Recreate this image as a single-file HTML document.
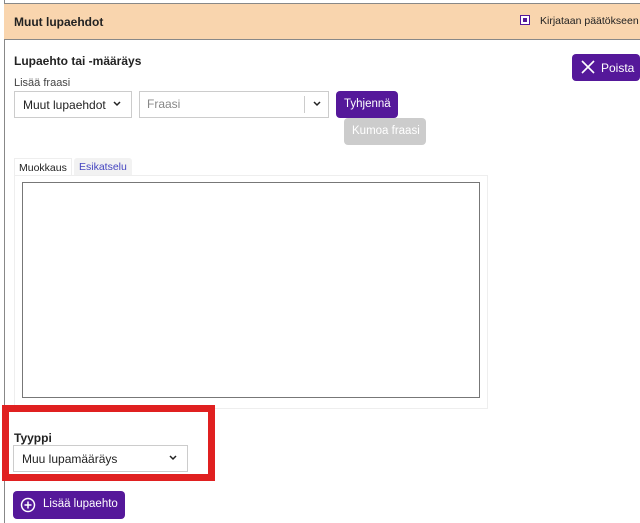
<!DOCTYPE html><html><head><style>
body{margin:0;width:640px;height:523px;background:#fff;font-family:"Liberation Sans",sans-serif;position:relative;overflow:hidden;color:#222}
div,span{position:absolute;box-sizing:border-box;white-space:nowrap}
.sel{border:1px solid #ccc;background:#fff;font-size:12px;}
.btn{background:#55189a;color:#fff;border-radius:4px;font-size:11.5px;}
</style></head><body>
<div style="left:4px;top:0;width:1px;height:523px;background:#888"></div>
<div style="left:4px;top:3px;width:636px;height:37px;background:#f9d5ae;border-top:1px solid #888;border-bottom:1px solid #888"></div>
<div style="left:14px;top:15px;font-size:12px;font-weight:bold">Muut lupaehdot</div>
<div style="left:520px;top:15px;width:10px;height:10px;border:1px solid #55189a;background:#fff"><span style="left:2px;top:2px;width:4px;height:4px;background:#55189a"></span></div>
<div style="left:540px;top:15px;font-size:10.5px">Kirjataan päätökseen</div>
<div style="left:14px;top:54px;font-size:12px;font-weight:bold">Lupaehto tai -määräys</div>
<div class="btn" style="left:572px;top:54px;width:68px;height:27px;font-size:12px;padding:7px 0 0 29px">Poista</div>
<svg style="position:absolute;left:581px;top:60px" width="14" height="14"><path d="M1 1L13 13M13 1L1 13" stroke="#fff" stroke-width="1.6"/></svg>
<div style="left:14px;top:77px;font-size:11px;color:#444">Lisää fraasi</div>
<div class="sel" style="left:14px;top:91px;width:118px;height:27px;padding:6px 0 0 8px">Muut lupaehdot</div>
<svg style="position:absolute;left:113px;top:101px" width="8" height="6"><path d="M1 1L4 4L7 1" stroke="#222" stroke-width="1.5" fill="none"/></svg>
<div class="sel" style="left:139px;top:91px;width:190px;height:27px;padding:5px 0 0 7px;color:#888">Fraasi</div>
<div style="left:304px;top:96px;width:1px;height:17px;background:#ccc"></div>
<svg style="position:absolute;left:313px;top:101px" width="8" height="6"><path d="M1 1L4 4L7 1" stroke="#222" stroke-width="1.5" fill="none"/></svg>
<div class="btn" style="left:336px;top:91px;width:62px;height:27px;padding:7px 0 0 8px">Tyhjennä</div>
<div class="btn" style="left:344px;top:118px;width:82px;height:27px;padding:7px 0 0 8px;background:#ccc">Kumoa fraasi</div>
<div style="left:14px;top:158px;width:58px;height:18px;border:1px solid #eee;border-bottom:none;font-size:10.5px;padding:3px 0 0 4px">Muokkaus</div>
<div style="left:74px;top:158px;width:58px;height:18px;background:#f2f2f2;border-radius:3px 3px 0 0;font-size:10.5px;padding:3px 0 0 5px;color:#4545c0">Esikatselu</div>
<div style="left:14px;top:175px;width:474px;height:234px;border:1px solid #eee"></div>
<div style="left:22px;top:182px;width:458px;height:216px;border:1px solid #777"></div>
<div style="left:2px;top:405px;width:213px;height:76px;border:7px solid #e02020"></div>
<div style="left:14px;top:431px;font-size:12px;font-weight:bold">Tyyppi</div>
<div class="sel" style="left:13px;top:445px;width:175px;height:27px;padding:6px 0 0 8px">Muu lupamääräys</div>
<svg style="position:absolute;left:169px;top:455px" width="8" height="6"><path d="M1 1L4 4L7 1" stroke="#222" stroke-width="1.5" fill="none"/></svg>
<div class="btn" style="left:13px;top:491px;width:112px;height:28px;padding:7px 0 0 30px">Lisää lupaehto</div>
<svg style="position:absolute;left:20px;top:497px" width="16" height="16"><circle cx="8" cy="8" r="6.5" stroke="#fff" stroke-width="1.5" fill="none"/><path d="M8 4.5V11.5M4.5 8H11.5" stroke="#fff" stroke-width="1.5"/></svg>
</body></html>
